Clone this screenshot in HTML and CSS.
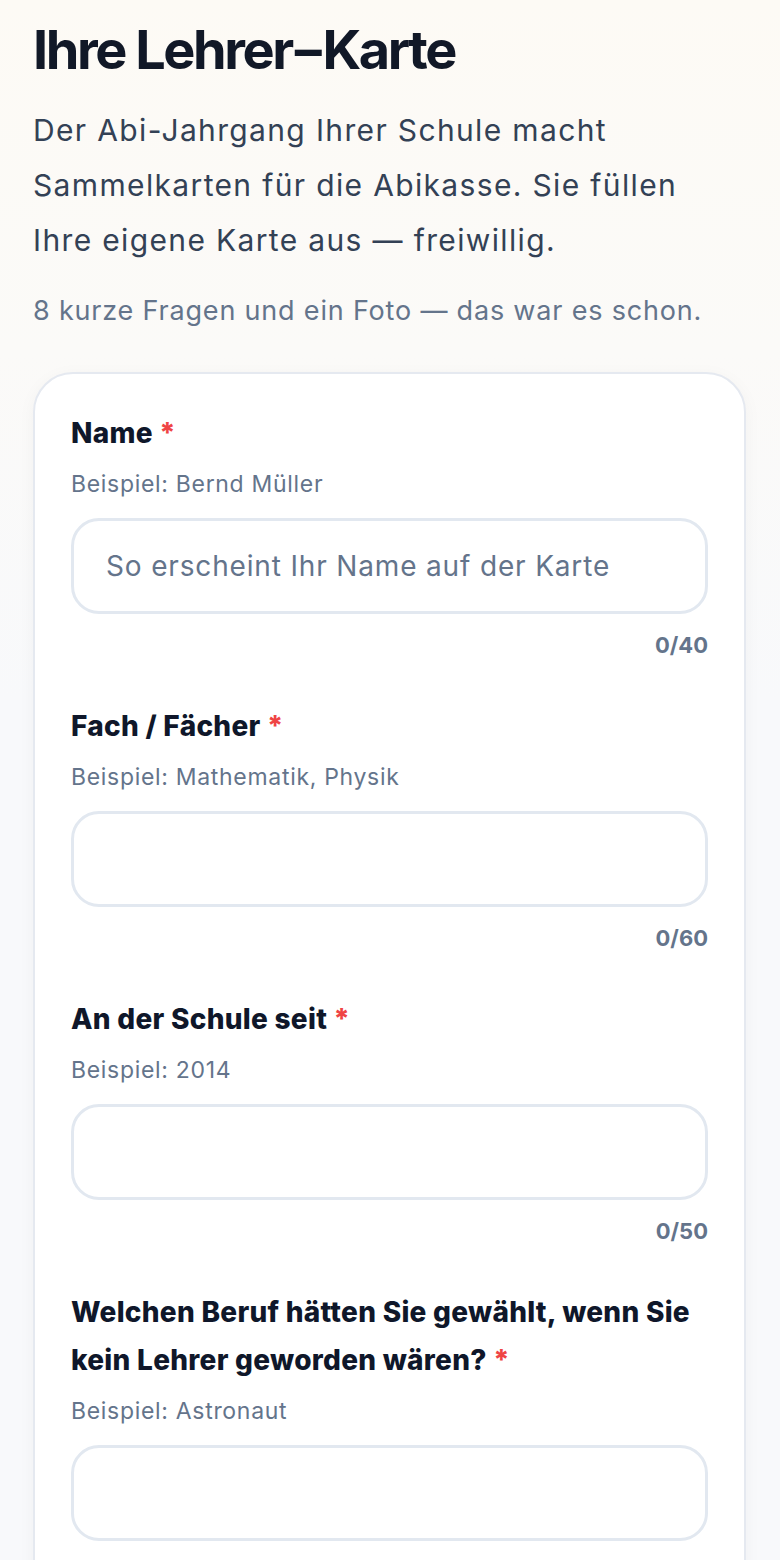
FILE: index.html
```html
<!DOCTYPE html>
<html lang="de">
<head>
<meta charset="utf-8">
<title>Ihre Lehrer-Karte</title>
<link rel="stylesheet" href="styles.css">
</head>
<body>
<main class="page">
  <header class="intro">
    <h1 class="title">Ihre Lehrer<span class="dash">–</span>Karte</h1>
    <p class="lead">Der Abi-Jahrgang Ihrer Schule macht Sammelkarten für die Abikasse. Sie füllen Ihre eigene Karte aus — freiwillig.</p>
    <p class="sub">8 kurze Fragen und ein Foto — das war es schon.</p>
  </header>
  <form class="card">
    <div class="field">
      <label class="label" for="f1">Name <span class="req">*</span></label>
      <div class="hint">Beispiel: Bernd Müller</div>
      <input class="input" id="f1" type="text" placeholder="So erscheint Ihr Name auf der Karte">
      <div class="count">0/40</div>
    </div>
    <div class="field">
      <label class="label" for="f2">Fach / Fächer <span class="req">*</span></label>
      <div class="hint">Beispiel: Mathematik, Physik</div>
      <input class="input" id="f2" type="text">
      <div class="count">0/60</div>
    </div>
    <div class="field">
      <label class="label" for="f3">An der Schule seit <span class="req">*</span></label>
      <div class="hint">Beispiel: 2014</div>
      <input class="input" id="f3" type="text">
      <div class="count">0/50</div>
    </div>
    <div class="field">
      <label class="label" for="f4">Welchen Beruf hätten Sie gewählt, wenn Sie kein Lehrer geworden wären? <span class="req">*</span></label>
      <div class="hint">Beispiel: Astronaut</div>
      <input class="input" id="f4" type="text">
      <div class="count">0/60</div>
    </div>
  </form>
</main>
</body>
</html>
```
FILE: styles.css
```css
* { box-sizing: border-box; }
html, body { margin: 0; padding: 0; }
body {
  font-family: Inter, "Noto Sans", sans-serif;
  background: linear-gradient(180deg, #fdfaf5 0px, #fbfaf8 350px, #f8f9fb 700px);
  color: #0f172a;
  min-height: 1560px;
}
.page {
  padding: 20px 34px 0 33px;
}
.intro { margin-bottom: 41px; }
.title {
  margin: 0;
  font-size: 54px;
  line-height: 60px;
  font-weight: 700;
  letter-spacing: -0.045em;
  color: #111827;
}
.dash { margin: 0 3px; }
.lead {
  margin: 23px 0 0;
  font-size: 30px;
  line-height: 55px;
  letter-spacing: 0.045em;
  color: #334155;
}
.sub {
  margin: 23px 0 0;
  font-size: 27px;
  line-height: 40px;
  letter-spacing: 0.03em;
  color: #64748b;
}
.card {
  background: #fff;
  border: 2px solid #e5e9f0;
  border-radius: 40px;
  padding: 35px 36px 40px;
  box-shadow: 0 4px 18px rgba(15, 23, 42, 0.04);
}
.field { display: flex; flex-direction: column; margin-bottom: 42px; }
.label {
  font-size: 28px;
  line-height: 48px;
  font-weight: 800;
  letter-spacing: 0.01em;
  color: #0f172a;
}
.req { color: #ef4444; }
.hint {
  margin-top: 12px;
  font-size: 23px;
  line-height: 30px;
  letter-spacing: 0.03em;
  color: #64748b;
}
.input {
  margin-top: 19px;
  height: 96px;
  width: 100%;
  border: 3px solid #e2e8f0;
  border-radius: 28px;
  padding: 0 32px;
  font-family: inherit;
  font-size: 28px;
  letter-spacing: 0.03em;
  color: #0f172a;
  background: #fff;
  outline: none;
}
.input::placeholder { color: #64748b; opacity: 1; }
.count {
  margin-top: 16px;
  text-align: right;
  font-size: 22px;
  line-height: 30px;
  font-weight: 700;
  color: #64748b;
}
```
